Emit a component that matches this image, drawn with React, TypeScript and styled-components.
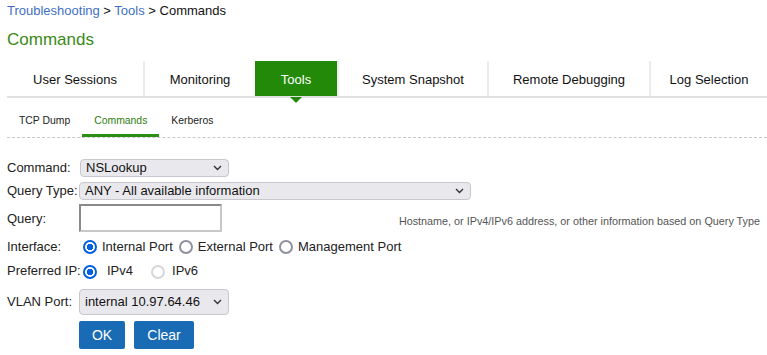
import React, { useState } from 'react';
import styled, { createGlobalStyle, css } from 'styled-components';

const GlobalStyle = createGlobalStyle`
  html, body {
    margin: 0;
    padding: 0;
    background: #fff;
    font-family: "Liberation Sans", Arial, sans-serif;
    color: #111;
  }
`;

const mainTabs = [
  { label: 'User Sessions', width: 136 },
  { label: 'Monitoring', width: 112 },
  { label: 'Tools', width: 82 },
  { label: 'System Snapshot', width: 150 },
  { label: 'Remote Debugging', width: 162 },
  { label: 'Log Selection', width: 118 },
];

const subTabs = ['TCP Dump', 'Commands', 'Kerberos'];

const Chevron = () => (
  <svg width="9" height="6" viewBox="0 0 9 6">
    <path d="M1 1 L4.5 4.5 L8 1" fill="none" stroke="#333" strokeWidth="1.4" />
  </svg>
);

const App = () => {
  const [iface, setIface] = useState('internal');
  const [ip, setIp] = useState('ipv4');

  return (
    <Page>
      <GlobalStyle />
      <Breadcrumb>
        <Crumb href="#">Troubleshooting</Crumb> &gt; <Crumb href="#">Tools</Crumb> &gt; Commands
      </Breadcrumb>
      <Title>Commands</Title>

      <TabBar>
        {mainTabs.map((t, i) => (
          <MainTab key={t.label} $w={t.width} $active={t.label === 'Tools'} $first={i === 0}>
            {t.label}
          </MainTab>
        ))}
      </TabBar>

      <SubBar>
        {subTabs.map((s) => (
          <SubTab key={s} $active={s === 'Commands'}>{s}</SubTab>
        ))}
      </SubBar>

      <Form>
        <Row $h={23}>
          <Label $w={73}>Command:</Label>
          <Select $w={149} $h={18}>
            <span>NSLookup</span>
            <Chevron />
          </Select>
        </Row>
        <Row $h={23}>
          <Label $w={72}>Query Type:</Label>
          <Select $w={392} $h={18}>
            <span>ANY - All available information</span>
            <Chevron />
          </Select>
        </Row>
        <Row $h={32}>
          <Label $w={72}>Query:</Label>
          <TextBox />
          <Hint>Hostname, or IPv4/IPv6 address, or other information based on Query Type</Hint>
        </Row>
        <Row $h={24}>
          <Label $w={76}>Interface:</Label>
          <RadioGroup>
            <RadioItem onClick={() => setIface('internal')}>
              <Radio $checked={iface === 'internal'} />Internal Port
            </RadioItem>
            <RadioItem onClick={() => setIface('external')}>
              <Radio $checked={iface === 'external'} />External Port
            </RadioItem>
            <RadioItem onClick={() => setIface('mgmt')}>
              <Radio $checked={iface === 'mgmt'} />Management Port
            </RadioItem>
          </RadioGroup>
        </Row>
        <Row $h={25}>
          <Label $w={76}>Preferred IP:</Label>
          <RadioGroup $gap={18}>
            <RadioItem onClick={() => setIp('ipv4')}>
              <Radio $checked={ip === 'ipv4'} $gap={10} />IPv4
            </RadioItem>
            <RadioItem>
              <Radio $disabled $gap={7} />IPv6
            </RadioItem>
          </RadioGroup>
        </Row>
        <Row $h={37}>
          <Label $w={72}>VLAN Port:</Label>
          <Select $w={150} $h={26}>
            <span>internal 10.97.64.46</span>
            <Chevron />
          </Select>
        </Row>
        <Buttons>
          <Button $w={46}>OK</Button>
          <Button $w={60}>Clear</Button>
        </Buttons>
      </Form>
    </Page>
  );
};

const Page = styled.div`
  width: 767px;
  height: 355px;
  overflow: hidden;
  padding-left: 7px;
  box-sizing: border-box;
`;

const Breadcrumb = styled.div`
  font-size: 13px;
  line-height: 15px;
  padding-top: 3px;
  color: #111;
`;

const Crumb = styled.a`
  color: #3f6fc4;
  text-decoration: none;
`;

const Title = styled.h1`
  margin: 12px 0 0;
  font-size: 17px;
  line-height: 20px;
  font-weight: normal;
  color: #3a8a17;
`;

const TabBar = styled.div`
  display: flex;
  margin-top: 11px;
  height: 35px;
  border-bottom: 2px solid #e1e1e1;
`;

const MainTab = styled.div<{ $w: number; $active: boolean; $first: boolean }>`
  position: relative;
  width: ${({ $w }) => $w}px;
  flex: none;
  display: flex;
  align-items: center;
  justify-content: center;
  padding-top: 2px;
  font-size: 13px;
  color: #111;
  box-sizing: border-box;
  border-left: ${({ $first }) => ($first ? 'none' : '2px solid #ececec')};
  ${({ $active }) =>
    $active &&
    css`
      background: #238a09;
      color: #fff;
      border-left: none;
      &::after {
        content: '';
        position: absolute;
        left: 50%;
        bottom: -7px;
        transform: translateX(-50%);
        border-left: 6px solid transparent;
        border-right: 6px solid transparent;
        border-top: 6px solid #238a09;
      }
    `}
`;

const SubBar = styled.div`
  display: flex;
  margin-top: 16px;
  height: 23px;
  border-bottom: 1px dashed #c8c8c8;
`;

const SubTab = styled.div<{ $active: boolean }>`
  padding: 0 12px;
  font-size: 10.4px;
  line-height: 14px;
  color: ${({ $active }) => ($active ? '#2f7d12' : '#222')};
  box-sizing: border-box;
  border-bottom: 3px solid ${({ $active }) => ($active ? '#2b8f16' : 'transparent')};
`;

const Form = styled.div`
  margin-top: 18px;
  font-size: 13px;
`;

const Row = styled.div<{ $h: number }>`
  display: flex;
  align-items: center;
  height: ${({ $h }) => $h}px;
`;

const Label = styled.div<{ $w: number }>`
  width: ${({ $w }) => $w}px;
  flex: none;
  font-size: 13px;
  color: #222;
`;

const Select = styled.div<{ $w: number; $h: number }>`
  width: ${({ $w }) => $w}px;
  height: ${({ $h }) => $h}px;
  box-sizing: border-box;
  display: flex;
  align-items: center;
  justify-content: space-between;
  padding: 0 6px 0 5px;
  background: #e9e9ed;
  border: 1px solid #c8c8cc;
  border-radius: 4px;
  font-size: 13px;
  color: #111;
`;

const TextBox = styled.div`
  width: 143px;
  height: 28px;
  box-sizing: border-box;
  border: 2px solid #8a8a8a;
  border-right-color: #c8c8c8;
  border-bottom-color: #c8c8c8;
  background: #fff;
`;

const Hint = styled.div`
  margin-left: auto;
  margin-right: 7px;
  margin-top: 6px;
  font-size: 10.8px;
  color: #555;
`;

const RadioGroup = styled.div<{ $gap?: number }>`
  display: flex;
  align-items: center;
  gap: ${({ $gap }) => $gap ?? 6}px;
`;

const RadioItem = styled.label`
  display: flex;
  align-items: center;
  font-size: 13px;
  color: #222;
  cursor: pointer;
`;

const Radio = styled.span<{ $checked?: boolean; $disabled?: boolean; $gap?: number }>`
  width: 14px;
  height: 14px;
  box-sizing: border-box;
  border-radius: 50%;
  margin-right: ${({ $gap }) => $gap ?? 5}px;
  margin-top: 2px;
  border: 2px solid ${({ $disabled }) => ($disabled ? '#d6d6d6' : '#8f8f9d')};
  background: #fff;
  ${({ $checked }) =>
    $checked &&
    css`
      border-color: #0060df;
      background: radial-gradient(circle, #0060df 0 3px, #fff 3.5px);
    `}
`;

const Buttons = styled.div`
  display: flex;
  gap: 9px;
  margin-left: 72px;
  margin-top: 1px;
`;

const Button = styled.button<{ $w: number }>`
  width: ${({ $w }) => $w}px;
  height: 28px;
  border: none;
  border-radius: 2px;
  background: #1a6bb6;
  color: #fff;
  font-family: "Liberation Sans", Arial, sans-serif;
  font-size: 14px;
  padding: 0;
`;

export default App;
